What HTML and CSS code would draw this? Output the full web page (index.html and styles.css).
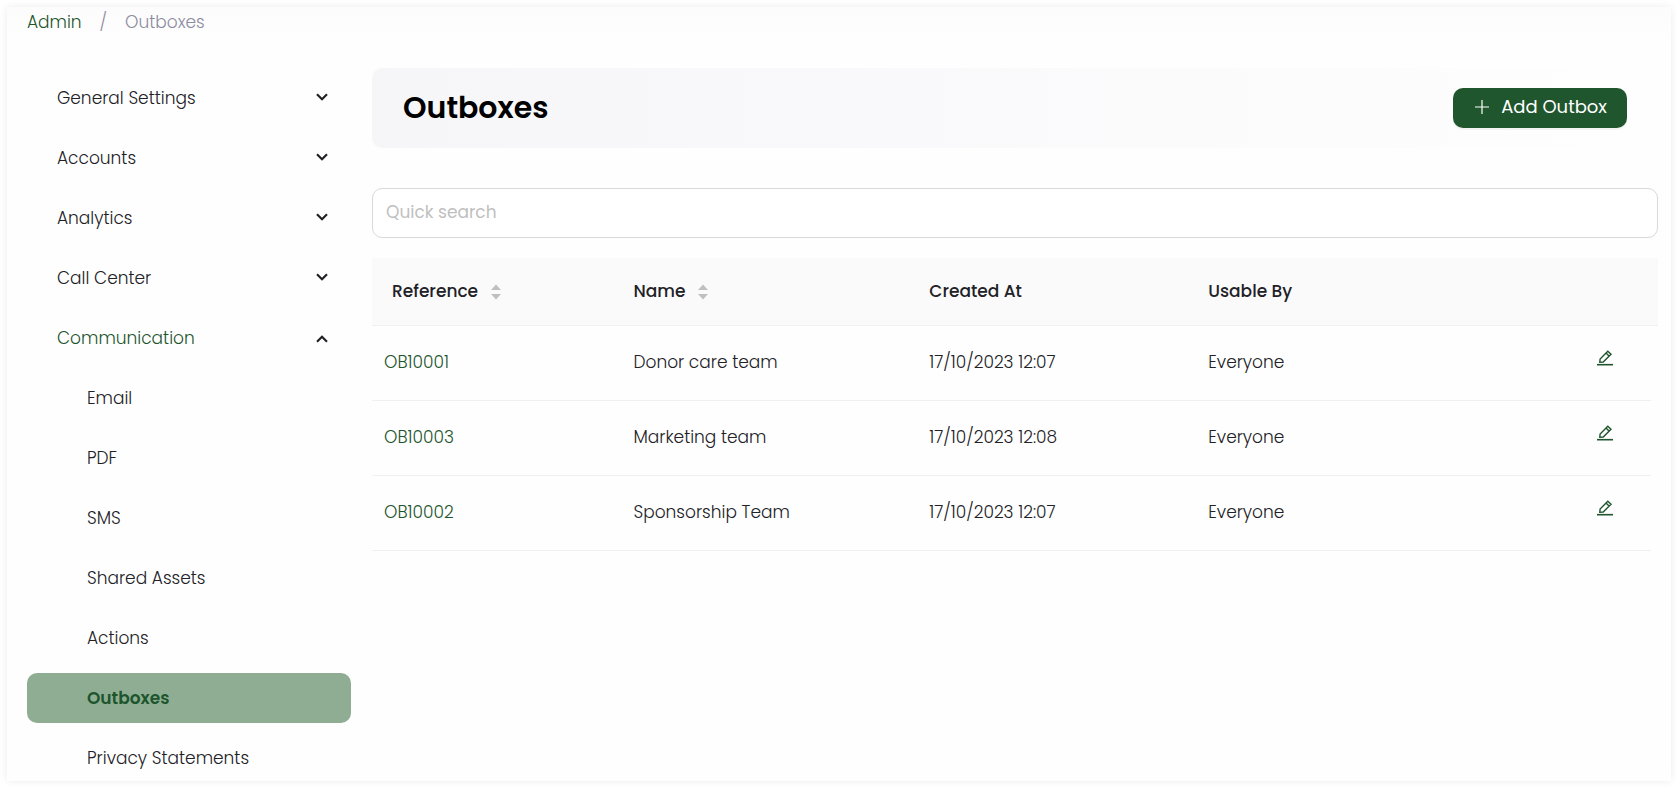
FILE: index.html
```html
<!DOCTYPE html>
<html lang="en">
<head>
<meta charset="utf-8">
<meta name="viewport" content="width=device-width, initial-scale=1">
<title>Outboxes</title>
<link rel="stylesheet" href="styles.css">
</head>
<body>
<svg class="defs" aria-hidden="true">
  <symbol id="chevron" viewBox="0 0 12 10"><path d="M1 1.200 6 6.200 11 1.200" fill="none" stroke="currentColor" stroke-width="2.200"/></symbol>
  <symbol id="sorter" viewBox="0 0 10 16"><path d="M5 0.5 10 6H0ZM5 15.500 10 10H0Z" fill="currentColor"/></symbol>
  <symbol id="edit" viewBox="0 0 16 16"><path d="M2.800 12.300 3.100 9 10.800 1.300 14 4.300 6.200 12ZM9.300 3.200 12 5.900" fill="none" stroke="currentColor" stroke-width="1.400"/><path d="M0 14.700H16" stroke="currentColor" stroke-width="1.600"/></symbol>
</svg>
<div class="card">
  <nav class="breadcrumb" aria-label="Breadcrumb">
    <a href="#">Admin</a><span>/</span><span>Outboxes</span>
  </nav>
  <div class="layout">
    <nav class="sidebar" aria-label="Settings">
      <button class="item">General Settings<svg class="chevron"><use href="#chevron"/></svg></button>
      <button class="item">Accounts<svg class="chevron"><use href="#chevron"/></svg></button>
      <button class="item">Analytics<svg class="chevron"><use href="#chevron"/></svg></button>
      <button class="item">Call Center<svg class="chevron"><use href="#chevron"/></svg></button>
      <button class="item item-open" aria-expanded="true">Communication<svg class="chevron chevron-up"><use href="#chevron"/></svg></button>
      <a class="item sub" href="#">Email</a>
      <a class="item sub" href="#">PDF</a>
      <a class="item sub" href="#">SMS</a>
      <a class="item sub" href="#">Shared Assets</a>
      <a class="item sub" href="#">Actions</a>
      <a class="item sub active" href="#" aria-current="page">Outboxes</a>
      <a class="item sub" href="#">Privacy Statements</a>
    </nav>
    <main class="main">
      <header class="banner">
        <h1>Outboxes</h1>
        <button class="add"><svg class="plus" viewBox="0 0 14 14"><path d="M7 0V14M0 7H14" stroke="currentColor" stroke-width="1.200"/></svg>Add Outbox</button>
      </header>
      <input class="search" type="search" placeholder="Quick search" aria-label="Quick search">
      <table class="table">
        <colgroup><col class="c-ref"><col class="c-name"><col class="c-date"><col class="c-use"><col><col class="c-gutter"></colgroup>
        <thead>
          <tr>
            <th class="first">Reference<svg class="sorter"><use href="#sorter"/></svg></th>
            <th>Name<svg class="sorter"><use href="#sorter"/></svg></th>
            <th>Created At</th>
            <th>Usable By</th>
            <th></th>
            <th class="gutter"></th>
          </tr>
        </thead>
        <tbody>
          <tr><td><a href="#">OB10001</a></td><td>Donor care team</td><td>17/10/2023 12:07</td><td>Everyone</td><td class="actions"><button class="edit" aria-label="Edit"><svg><use href="#edit"/></svg></button></td></tr>
          <tr><td><a href="#">OB10003</a></td><td>Marketing team</td><td>17/10/2023 12:08</td><td>Everyone</td><td class="actions"><button class="edit" aria-label="Edit"><svg><use href="#edit"/></svg></button></td></tr>
          <tr><td><a href="#">OB10002</a></td><td>Sponsorship Team</td><td>17/10/2023 12:07</td><td>Everyone</td><td class="actions"><button class="edit" aria-label="Edit"><svg><use href="#edit"/></svg></button></td></tr>
        </tbody>
      </table>
    </main>
  </div>
</div>
</body>
</html>
```
FILE: styles.css
```css
* { box-sizing: border-box; }

body {
  margin: 0;
  padding: 7px 8px 8px 7px;
  height: 100vh;
  overflow: hidden;
  background: #fff;
  color: #212126;
  font: 300 17px/26px Poppins, Inter, sans-serif;
}

button, input { font: inherit; color: inherit; }
button { border: 0; background: none; cursor: pointer; }
a { color: #1d552d; text-decoration: none; }
.defs { display: none; }

.card {
  height: 100%;
  padding: 2px 13px 0 20px;
  background: linear-gradient(#fcfcfc, #fefefe 36px);
  box-shadow: 0 0 8px rgba(0, 0, 0, 0.08);
}

.breadcrumb { display: flex; gap: 18px; color: #8c8ca0; }

.layout { display: flex; gap: 21px; padding-top: 33px; }

.sidebar {
  flex: 0 0 324px;
  display: flex;
  flex-direction: column;
  gap: 10px;
  padding-top: 5px;
}
.item {
  display: flex;
  align-items: center;
  justify-content: space-between;
  height: 50px;
  padding: 0 23px 0 30px;
  border-radius: 10px;
  color: #212126;
}
.item-open { color: #1d552d; }
.sub { padding-left: 60px; }
.active { background: #8fad93; color: #1d552d; font-weight: 600; }
.chevron { width: 12px; height: 10px; color: #212126; }
.chevron-up { transform: rotate(180deg); }

.main { flex: 1; min-width: 0; }
.banner {
  display: flex;
  align-items: center;
  justify-content: space-between;
  height: 80px;
  padding: 0 31px;
  border-radius: 10px;
  background: linear-gradient(90deg, #f6f6f9, #fefefe);
}
h1 { margin: 0; color: #000; font-size: 30px; line-height: 40px; font-weight: 600; }
.add {
  display: flex;
  align-items: center;
  gap: 12px;
  height: 40px;
  padding: 0 20px 2px 22px;
  border-radius: 10px;
  background: #1f562d;
  box-shadow: 0 2px 0 rgba(0, 0, 0, 0.04);
  color: #fff;
  font-size: 18px;
  font-weight: 400;
}
.plus { width: 14px; height: 14px; }

.search {
  display: block;
  width: 100%;
  height: 50px;
  margin: 40px 0 20px;
  padding: 0 13px 2px;
  border: 1px solid #d9d9d9;
  border-radius: 10px;
  background: #fff;
  font-weight: 400;
}
.search::placeholder { color: #bfbfbf; opacity: 1; }

.table { width: 100%; table-layout: fixed; border-collapse: separate; border-spacing: 0; }
.c-ref { width: 19.4%; }
.c-name { width: 23%; }
.c-date { width: 21.7%; }
.c-use { width: 20%; }
.c-gutter { width: 7px; }
th, td { padding: 0 12px 2px; border-bottom: 1px solid #f0f0f0; text-align: left; }
th { height: 68px; background: #fafafa; font-weight: 500; }
th.first { padding-left: 20px; }
th.gutter { padding: 0; }
td { height: 75px; }
.sorter { width: 10px; height: 16px; margin-left: 13px; color: #bfbfbf; vertical-align: -3px; }
.actions { padding-right: 38px; text-align: right; }
.edit { padding: 0; color: #1f562d; line-height: 16px; }
.edit svg { display: block; width: 16px; height: 16px; margin-bottom: 2px; }
```
